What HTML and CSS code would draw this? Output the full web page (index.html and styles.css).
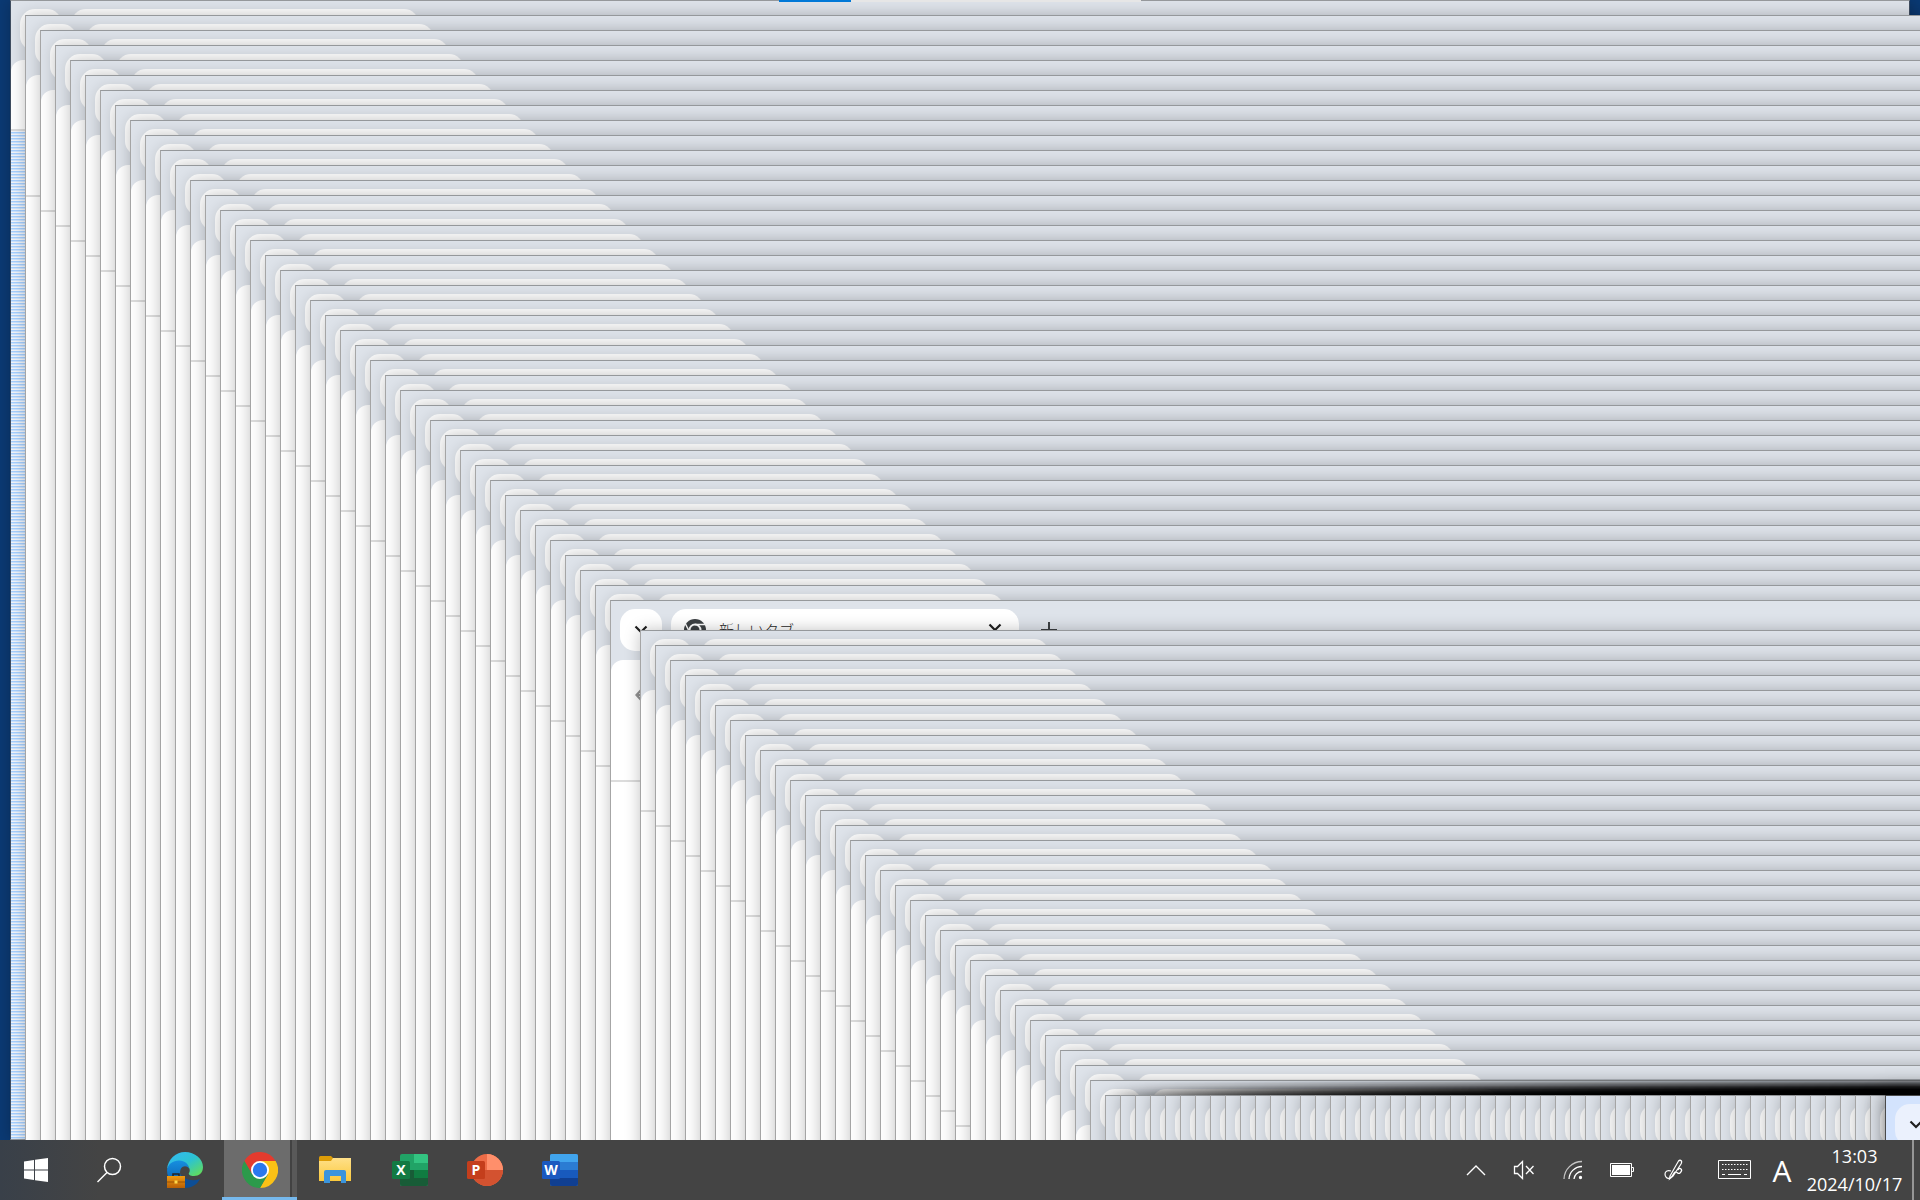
FILE: index.html
```html
<!DOCTYPE html>
<html lang="ja">
<head>
<meta charset="utf-8">
<title>デスクトップ</title>
<link rel="stylesheet" href="styles.css">
</head>
<body>
<main class="desktop" id="desktop">
  <div class="progress"><div class="progress-value"></div></div>
</main>

<footer class="taskbar">
  <nav class="apps" aria-label="タスクバー">
    <button class="app app-start" aria-label="スタート">
      <svg width="24" height="24" viewBox="0 0 24 24" fill="#fff"><path d="M0 3.4 10 2v9.5H0zM11 1.8 24 0v11.5H11zM0 12.5h10V22L0 20.6zM11 12.5h13V24l-13-1.8z"/></svg>
    </button>
    <button class="app" aria-label="検索">
      <svg width="26" height="26" viewBox="0 0 26 26" fill="none" stroke="#fff" stroke-width="1.5"><circle cx="15.500" cy="9.500" r="8"/><path d="M10 15.500 0.500 25"/></svg>
    </button>
    <button class="app" aria-label="Microsoft Edge">
      <svg width="36" height="36" viewBox="0 0 36 36">
        <defs>
          <linearGradient id="eg" x1="0" y1="0" x2="1" y2="1"><stop offset="0" stop-color="#35b9f5"/><stop offset=".5" stop-color="#2cc3d2"/><stop offset="1" stop-color="#6be046"/></linearGradient>
          <linearGradient id="eb" x1="0" y1="0" x2="0" y2="1"><stop offset="0" stop-color="#168fe0"/><stop offset="1" stop-color="#0b57a6"/></linearGradient>
          <linearGradient id="ec" x1="0" y1="0" x2="0" y2="1"><stop offset="0" stop-color="#f09a10"/><stop offset="1" stop-color="#b85f06"/></linearGradient>
        </defs>
        <path d="M0 17C1 7 9 0 18 0c10 0 18 7 18 15 0 6-4 9-9 9-4 0-6-1.500-5-3 2-3 0-8-6-9C9 10 3 13 0 17z" fill="url(#eg)"/>
        <path d="M0 18c1-6 6-9.500 12-9.500 6 0 10 4 10 8-2-3-6-3-8 0-2 4-1 9 4 13v6C8 36 0 29 0 18z" fill="url(#eb)"/>
        <path d="M14 22c3 5 10 8 19 5-3 6-9 9-15 9z" fill="#0d4e96"/>
        <path d="M6 24v-2h6v2" fill="none" stroke="#252525" stroke-width="1.500"/>
        <path d="M0 24h18v12H0z" fill="url(#ec)"/><path d="M0 30h18" stroke="#9a5206"/><path d="M7.500 28.500h3v3h-3z" fill="#ffd84a"/>
      </svg>
    </button>
    <button class="app app-active" aria-label="Google Chrome">
      <svg width="36" height="36" viewBox="0 0 36 36">
        <path d="M2.400 9A18 18 0 0 1 33.600 9H18L10.200 22.500z" fill="#e33b2e"/>
        <path d="M33.600 9A18 18 0 0 1 18 36L25.800 22.500 18 9z" fill="#fbc116"/>
        <path d="M18 36A18 18 0 0 1 2.400 9L10.200 22.500H25.800z" fill="#2c9a4b"/>
        <circle cx="18" cy="18" r="9" fill="#fff"/><circle cx="18" cy="18" r="7.200" fill="#2a78ee"/>
      </svg>
    </button>
    <button class="app" aria-label="エクスプローラー">
      <svg width="32" height="28" viewBox="0 0 32 28">
        <defs><linearGradient id="fo" x1="0" y1="0" x2="0" y2="1"><stop offset="0" stop-color="#ffe08a"/><stop offset="1" stop-color="#fbc93c"/></linearGradient></defs>
        <path d="M0 1.500Q0 0 1.500 0H12l3 3v3H0z" fill="#dd9d08"/>
        <path d="M0 5h12l2-3h18v23H0z" fill="url(#fo)"/>
        <path d="M5 27V16q0-2 2-2h18q2 0 2 2v11h-5v-7H11v7z" fill="#3b94dc"/>
      </svg>
    </button>
    <button class="app" aria-label="Excel">
      <svg width="36" height="32" viewBox="0 0 36 32">
        <rect x="8" width="28" height="32" rx="2" fill="#21a366"/>
        <path d="M22 0h12q2 0 2 2v7H22z" fill="#33c481"/><path d="M8 16h14v8H8z" fill="#185c37"/><path d="M22 16h14v8H22z" fill="#107c41"/><path d="M8 24h28v6q0 2-2 2H10q-2 0-2-2z" fill="#185c37"/>
        <rect y="7" width="18" height="18" rx="1.500" fill="#127a43"/>
        <text x="9" y="21" class="letter">X</text>
      </svg>
    </button>
    <button class="app" aria-label="PowerPoint">
      <svg width="36" height="32" viewBox="0 0 36 32">
        <circle cx="20" cy="16" r="16" fill="#ed6c47"/><path d="M20 0a16 16 0 0 1 16 16H20z" fill="#ff8f6b"/><path d="M4 16h32a16 16 0 0 1-32 0z" fill="#d35230"/>
        <rect y="7" width="18" height="18" rx="1.500" fill="#c43e1c"/>
        <text x="9" y="21" class="letter">P</text>
      </svg>
    </button>
    <button class="app" aria-label="Word">
      <svg width="36" height="32" viewBox="0 0 36 32">
        <rect x="8" width="28" height="32" rx="2" fill="#2b7cd3"/>
        <path d="M8 8V2q0-2 2-2h24q2 0 2 2v6z" fill="#41a5ee"/><path d="M8 16h28v8H8z" fill="#185abd"/><path d="M8 24h28v6q0 2-2 2H10q-2 0-2-2z" fill="#103f91"/>
        <rect y="7" width="18" height="18" rx="1.500" fill="#1a59c0"/>
        <text x="9" y="21" class="letter">W</text>
      </svg>
    </button>
  </nav>

  <div class="tray">
    <button class="tray-item" aria-label="隠れているインジケーター">
      <svg width="20" height="12" viewBox="0 0 20 12" fill="none" stroke="#fff" stroke-width="1.400"><path d="M1 11 10 2l9 9"/></svg>
    </button>
    <button class="tray-item" aria-label="音量">
      <svg width="22" height="20" viewBox="0 0 22 20" fill="none" stroke="#fff" stroke-width="1.300"><path d="M1.500 6.500h3L9.500 1.500v17l-5-5h-3zM13 6l7.500 8M20.500 6 13 14"/></svg>
    </button>
    <button class="tray-item tray-network" aria-label="ネットワーク">
      <svg width="20" height="20" viewBox="0 0 20 20" fill="none" stroke="#fff" stroke-width="1.300"><path d="M1 19A18 18 0 0 1 19 1.500" stroke="#c4c4c4"/><path d="M6 19A13 13 0 0 1 19 6.500M11 19a8 8 0 0 1 8-7.500"/><circle cx="17.500" cy="17.500" r="1" fill="#fff"/></svg>
    </button>
    <button class="tray-item" aria-label="バッテリー">
      <svg width="24" height="14" viewBox="0 0 24 14"><path d="M.5.5h21v13H.5zM22 4.500h1.500v4H22" fill="none" stroke="#fff"/><path d="M2 2h18v10H2z" fill="#fff"/></svg>
    </button>
    <button class="tray-item tray-ink" aria-label="Windows Ink">
      <svg width="22" height="22" viewBox="0 0 22 22" fill="none" stroke="#fff" stroke-width="1.200"><path d="M7 17 15.500 2q1.500-1.500 3 0 .5 1-.5 3L10 17l-3.500 3zM8 12c-3-1-6 0-6 3s2 5 5 4 3-5 5-6 3 3 5 1 2-3 1-4-2-1-3 1"/></svg>
    </button>
    <button class="tray-item tray-keyboard" aria-label="タッチ キーボード">
      <svg width="33" height="20" viewBox="0 0 33 20" fill="none" stroke="#fff"><path d="M.5.5h32v18H.5z"/><path d="M4 4.500h26M4 9.500h26" stroke-width="1.200" stroke-dasharray="1.500 1.500"/><path d="M4 14.500h3M10 14.500h13M26 14.500h3" stroke-width="1.200"/></svg>
    </button>
    <button class="ime" aria-label="入力モード">A</button>
    <button class="clock"><time>13:03</time><time>2024/10/17</time></button>
    <button class="show-desktop" aria-label="デスクトップの表示"></button>
  </div>
</footer>

<template id="window">
  <section class="window">
    <header class="tabstrip">
      <div class="tab-search"></div>
      <div class="tab"></div>
    </header>
    <div class="toolbar"></div>
  </section>
</template>

<template id="search-icon">
  <svg width="14" height="10" viewBox="0 0 14 10" fill="none" stroke="#1f1f1f" stroke-width="2.200"><path d="m1.500 1.500 5.500 5.500 5.500-5.500"/></svg>
</template>

<template id="tab-content">
  <svg width="22" height="22" viewBox="0 0 22 22">
    <circle cx="11" cy="11" r="11" fill="#3c4043"/>
    <circle cx="11" cy="11" r="5.500" fill="none" stroke="#fff" stroke-width="2"/>
    <path d="M11 5.500h10M6 14 1.500 5M16 14l-5 8" stroke="#fff" stroke-width="1.500"/>
  </svg>
  <span class="tab-title">新しいタブ</span>
  <button class="tab-close" aria-label="閉じる"><svg width="14" height="14" viewBox="0 0 14 14" stroke="#1f1f1f" stroke-width="2.200"><path d="m1.500 1.500 11 11M12.500 1.500l-11 11"/></svg></button>
</template>

<template id="new-tab">
  <button class="new-tab" aria-label="新しいタブを開く"><svg width="16" height="16" viewBox="0 0 16 16" stroke="#3c4043" stroke-width="2"><path d="M8 0v16M0 8h16"/></svg></button>
</template>

<template id="back">
  <button class="back" aria-label="戻る"><svg width="18" height="14" viewBox="0 0 18 14" fill="none" stroke="#949494" stroke-width="2.200"><path d="M7 1 1.500 7 7 13M2 7h16"/></svg></button>
</template>
<script src="windows.js"></script>
</body>
</html>
```

FILE: styles.css
```css
* { box-sizing: border-box; }

body {
  margin: 0;
  height: 100vh;
  display: flex;
  flex-direction: column;
  overflow: hidden;
  font-family: "Open Sans", "Noto Sans CJK JP", sans-serif;
}

button {
  padding: 0;
  border: 0;
  background: none;
  color: inherit;
  font: inherit;
}

svg { display: block; flex: none; }

/* Desktop and cascaded windows */
.desktop {
  position: relative;
  flex: 1;
  min-height: 0;
  overflow: hidden;
  background: #0b3a74;
}

.window {
  position: absolute;
  width: calc(100% - 20px);
  height: 100%;
  display: flex;
  flex-direction: column;
  border: 1px solid #96999c;
  border-left-color: #a6a6a6;
  background: #dee3ea;
  box-shadow: 0 0 15px rgba(0, 0, 0, 0.24);
}

.tabstrip {
  display: flex;
  gap: 9px;
  height: 59px;
  padding: 8px 9px;
}

.tab-search,
.tab {
  display: flex;
  align-items: center;
  height: 42px;
  border-radius: 15px;
  background: #fff;
}

.tab-search {
  width: 42px;
  justify-content: center;
}

.tab {
  width: 348px;
  gap: 13px;
  padding: 0 17px 0 13px;
}

.tab-title {
  flex: 1;
  padding-bottom: 2px;
  font: 15px "Noto Sans CJK JP", sans-serif;
  font-weight: 300;
  color: #1f1f1f;
}

.new-tab { padding: 0 22px 0 13px; height: 42px; }

.toolbar {
  flex: none;
  height: 122px;
  padding: 25px 24px;
  border-bottom: 2px solid #dcdcdc;
  border-radius: 12px 0 0 0;
  background: #fff;
}

.window::after {
  content: "";
  flex: 1;
  background: #fff;
}

.window-first { border-left-color: #3f4d60; border-right-color: #3f4d60; }
.window-first .toolbar { height: 71px; }
.window-first::after {
  background: repeating-linear-gradient(#f2f5fa 0 1px, #a6d0ff 1px 2px, #cde4ff 2px 3px);
}

.window-active {
  border-color: #4a4a4a;
  background: #d3e3fd;
  box-shadow: 0 0 18px rgba(0, 0, 0, 0.6);
}
.window-active .tab-search { background: #ebf1fd; }

.progress {
  position: absolute;
  z-index: 1;
  top: 0;
  left: 779px;
  width: 362px;
  height: 2px;
  background: #e6e6e6;
}
.progress-value { width: 20%; height: 100%; background: #0078d7; }

/* Taskbar */
.taskbar {
  flex: none;
  display: flex;
  justify-content: space-between;
  height: 60px;
  background: linear-gradient(90deg, #394049, #444 100px);
  color: #fff;
}

.apps,
.tray { display: flex; }

.app {
  width: 75px;
  display: flex;
  align-items: center;
  justify-content: center;
}
.app-start { width: 72px; }

.app-active {
  padding-top: 3px;
  border-bottom: 3px solid #76b9ed;
  background: linear-gradient(90deg, #444 0 2px, #6c6c6c 2px 68px, #424242 68px 70px, #595959 70px);
}

.letter {
  font: bold 14px "Open Sans", sans-serif;
  text-anchor: middle;
  fill: #fff;
}

.tray-item {
  width: 48px;
  display: flex;
  align-items: center;
  justify-content: center;
}
.tray-network { width: 50px; }
.tray-ink { width: 55px; }
.tray-keyboard { width: 66px; }

.ime { width: 30px; font-size: 30px; }

.clock {
  width: 115px;
  display: flex;
  flex-direction: column;
  align-items: center;
  justify-content: center;
  font-size: 18px;
  line-height: 28px;
}

.show-desktop { width: 8px; border-left: 2px solid #969696; }
```

FILE: windows.js
```js
const STEP = 15;
const LEFT = 10;
const DIAGONAL = 73;
const LAST_COLUMN = 125;
const SKIPPED = 41;
const OPEN = 40;

const desktop = document.getElementById("desktop");
const copy = (id) => document.getElementById(id).content.cloneNode(true);

for (let i = 0; i <= LAST_COLUMN; i++) {
  if (i === SKIPPED) continue;
  const fragment = copy("window");
  const win = fragment.querySelector(".window");
  win.style.left = `${LEFT + i * STEP}px`;
  win.style.top = `${Math.min(i, DIAGONAL) * STEP}px`;

  if (i === 0) win.classList.add("window-first");
  if (i === LAST_COLUMN) win.classList.add("window-active");
  if (i === OPEN || i === LAST_COLUMN) {
    win.querySelector(".tab-search").append(copy("search-icon"));
  }
  if (i === OPEN) {
    win.querySelector(".tab").append(copy("tab-content"));
    win.querySelector(".tabstrip").append(copy("new-tab"));
    win.querySelector(".toolbar").append(copy("back"));
  }
  desktop.append(fragment);
}
```
